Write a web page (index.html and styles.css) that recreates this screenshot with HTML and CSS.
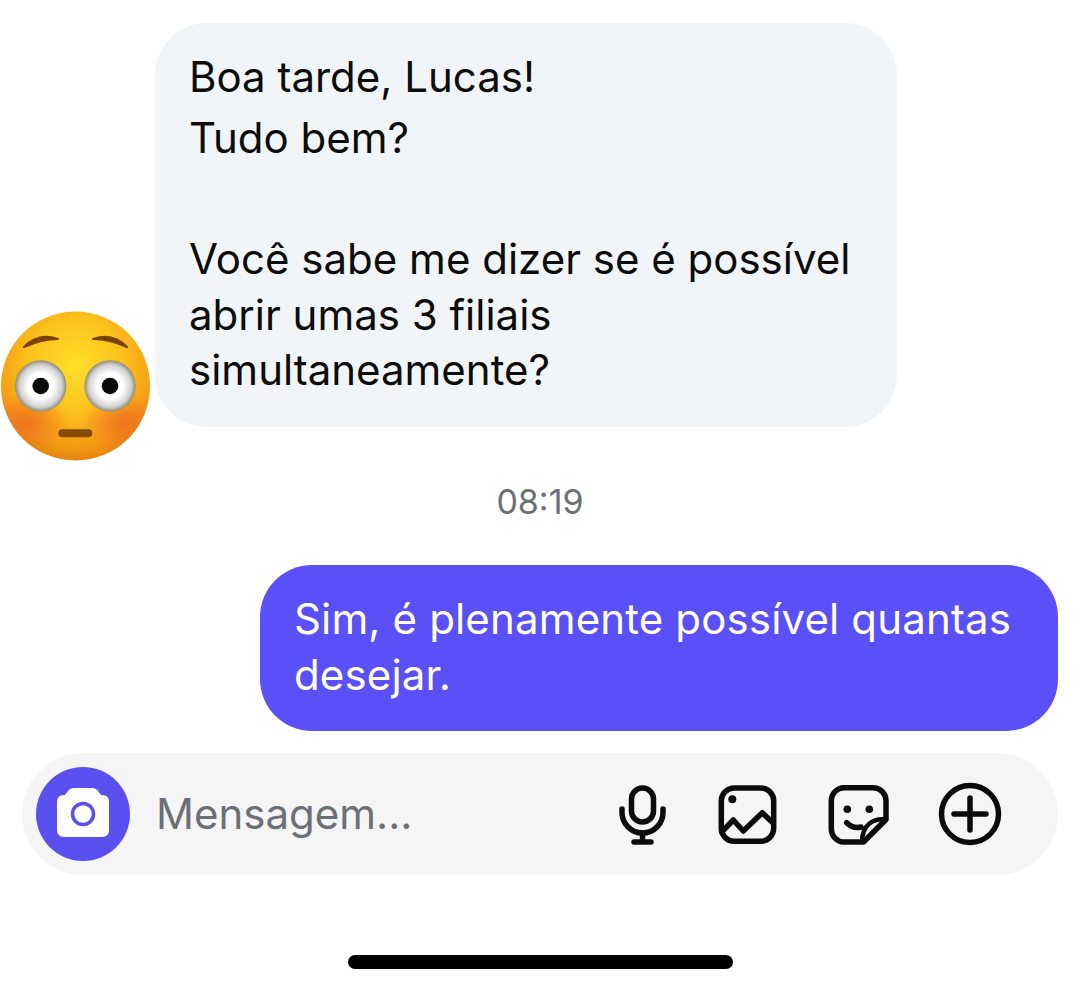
FILE: index.html
```html
<!DOCTYPE html>
<html lang="pt-BR">
<head>
  <meta charset="UTF-8">
  <title>Mensagens</title>
  <link rel="stylesheet" href="styles.css">
</head>
<body>

  <div class="incoming">
    <svg class="emoji" viewBox="0 10 152 152" width="152" height="152">
      <defs>
        <radialGradient id="face" cx="50%" cy="36%" r="64%">
          <stop offset="0" stop-color="#ffdf2a"/>
          <stop offset="0.5" stop-color="#fcc11c"/>
          <stop offset="0.85" stop-color="#f49a14"/>
          <stop offset="1" stop-color="#e4840e"/>
        </radialGradient>
        <radialGradient id="blush">
          <stop offset="0" stop-color="#ee5a24" stop-opacity="0.65"/>
          <stop offset="1" stop-color="#ee5a24" stop-opacity="0"/>
        </radialGradient>
        <radialGradient id="eye">
          <stop offset="0.5" stop-color="#ffffff"/>
          <stop offset="0.82" stop-color="#d2d2d2"/>
          <stop offset="1" stop-color="#8f8c76"/>
        </radialGradient>
        <clipPath id="face-clip">
          <circle cx="75.5" cy="86" r="74.5"/>
        </clipPath>
      </defs>
      <circle cx="75.5" cy="86" r="74.5" fill="url(#face)"/>
      <g clip-path="url(#face-clip)">
        <ellipse cx="28" cy="122" rx="42" ry="30" fill="url(#blush)"/>
        <ellipse cx="123" cy="122" rx="42" ry="30" fill="url(#blush)"/>
      </g>
      <path d="M24 47Q38 32 58 39Q42 39 24 47Z" fill="#7a4300" stroke="#7a4300" stroke-width="2" stroke-linejoin="round"/>
      <path d="M127 47Q113 32 93 39Q109 39 127 47Z" fill="#7a4300" stroke="#7a4300" stroke-width="2" stroke-linejoin="round"/>
      <circle cx="40.7" cy="86" r="25.7" fill="url(#eye)"/>
      <circle cx="110" cy="86" r="25.7" fill="url(#eye)"/>
      <circle cx="40.7" cy="86" r="8.3" fill="#0a0a0a"/>
      <circle cx="110" cy="86" r="8.3" fill="#0a0a0a"/>
      <rect x="58.3" y="129.3" width="34" height="8" rx="4" fill="#864a05"/>
    </svg>
    <div class="bubble bubble-in">
      <p class="line">Boa tarde, Lucas!</p>
      <p class="line">Tudo bem?</p>
      <p class="line para">Você sabe me dizer se é possível abrir umas 3 filiais simultaneamente?</p>
    </div>
  </div>

  <div class="time">08:19</div>

  <div class="bubble bubble-out">
    <p class="line">Sim, é plenamente possível quantas desejar.</p>
  </div>

  <div class="composer">
    <div class="camera">
      <svg class="camera-icon" viewBox="0 0 52 50" width="52" height="50">
        <path d="M8 7L11 3Q13 0 17 0H35Q39 0 41 3L44 7H45Q52 7 52 14V42Q52 49 45 49H7Q0 49 0 42V14Q0 7 7 7Z" fill="#fff"/>
        <circle cx="26" cy="26" r="10.5" fill="none" stroke="#5a50f0" stroke-width="3.5"/>
      </svg>
    </div>
    <div class="placeholder">Mensagem...</div>
    <div class="tools">
      <svg class="tool" viewBox="0 0 64 64" width="64" height="64">
        <rect x="20.5" y="6" width="22" height="34" rx="11"/>
        <path d="M11 27V30.5A20.5 20.5 0 0 0 52 30.5V27"/>
        <path d="M31.5 51V60M23 60H40"/>
      </svg>
      <svg class="tool tool-image" viewBox="0 0 64 64" width="64" height="64">
        <rect x="5.3" y="6" width="52.4" height="53.3" rx="13"/>
        <circle class="dot" cx="16.3" cy="17.3" r="4"/>
        <path d="M5.7 50L17.3 38L27.3 49L46.3 30.7L57 41"/>
      </svg>
      <svg class="tool tool-sticker" viewBox="0 0 64 64" width="64" height="64">
        <path d="M18 5.7H47A13 13 0 0 1 60 18.7V37.5L37.5 60H18A13 13 0 0 1 5.3 47V18.7A13 13 0 0 1 18 5.7Z"/>
        <path class="thin" d="M60 37.5C48 36 36 42 36 60"/>
        <path d="M20.7 40.7Q27 47 35 45"/>
        <circle class="dot" cx="21.3" cy="27.3" r="3.8"/>
        <circle class="dot" cx="43.3" cy="27.3" r="3.8"/>
      </svg>
      <svg class="tool tool-plus" viewBox="0 0 64 64" width="64" height="64">
        <circle cx="32" cy="32" r="28.5"/>
        <path d="M32 16V48M16 32H48"/>
      </svg>
    </div>
  </div>

  <div class="home-bar"></div>

</body>
</html>
```

FILE: styles.css
```css
body {
  margin: 0;
  height: 991px;
  overflow: hidden;
  background-color: #fff;
  font-family: Inter, "Liberation Sans", sans-serif;
  font-size: 42px;
  color: #0c0c0c;
}

.incoming {
  position: relative;
  padding: 23px 183px 0 155px;
}

.emoji {
  position: absolute;
  left: 0;
  top: 310px;
}

.bubble {
  box-sizing: border-box;
  padding-left: 34px;
}

.bubble-in {
  height: 404px;
  padding-top: 26px;
  padding-right: 30px;
  border-radius: 52px;
  background-color: #f2f5f7;
}

.bubble-out {
  width: 798px;
  height: 166px;
  margin-left: 260px;
  padding-top: 26px;
  padding-right: 30px;
  border-radius: 52px;
  background-color: #5a50f7;
  color: #fff;
  letter-spacing: 0.15px;
}

.line {
  margin: 0 0 5px;
  line-height: 55.5px;
}

.para {
  margin-top: 66px;
}

.time {
  padding: 56px 0 44px;
  line-height: 38px;
  font-size: 34px;
  text-align: center;
  color: #6b6f75;
}

.composer {
  display: flex;
  align-items: center;
  width: 1036px;
  height: 122px;
  box-sizing: border-box;
  margin: 22px 0 0 22px;
  padding: 0 56px 0 14px;
  border-radius: 61px;
  background-color: #f5f5f6;
}

.camera {
  display: flex;
  align-items: center;
  justify-content: center;
  width: 94px;
  height: 94px;
  border-radius: 50%;
  background-color: #5a50f0;
}

.camera-icon {
  margin-bottom: 2px;
}

.placeholder {
  flex: 1;
  margin: 0 0 2px 26px;
  color: #6c6f76;
}

.tools {
  display: flex;
}

.tool {
  fill: none;
  stroke: #0b0b0b;
  stroke-width: 5.5;
  stroke-linecap: round;
  stroke-linejoin: round;
}

.tool .dot {
  fill: #0b0b0b;
  stroke: none;
}

.tool .thin {
  stroke-width: 4.5;
}

.tool-image {
  margin-left: 41px;
}

.tool-sticker {
  margin-left: 46px;
}

.tool-plus {
  margin-left: 48px;
}

.home-bar {
  width: 385px;
  height: 14px;
  margin: 80px 0 0 348px;
  border-radius: 7px;
  background-color: #000;
}
```
